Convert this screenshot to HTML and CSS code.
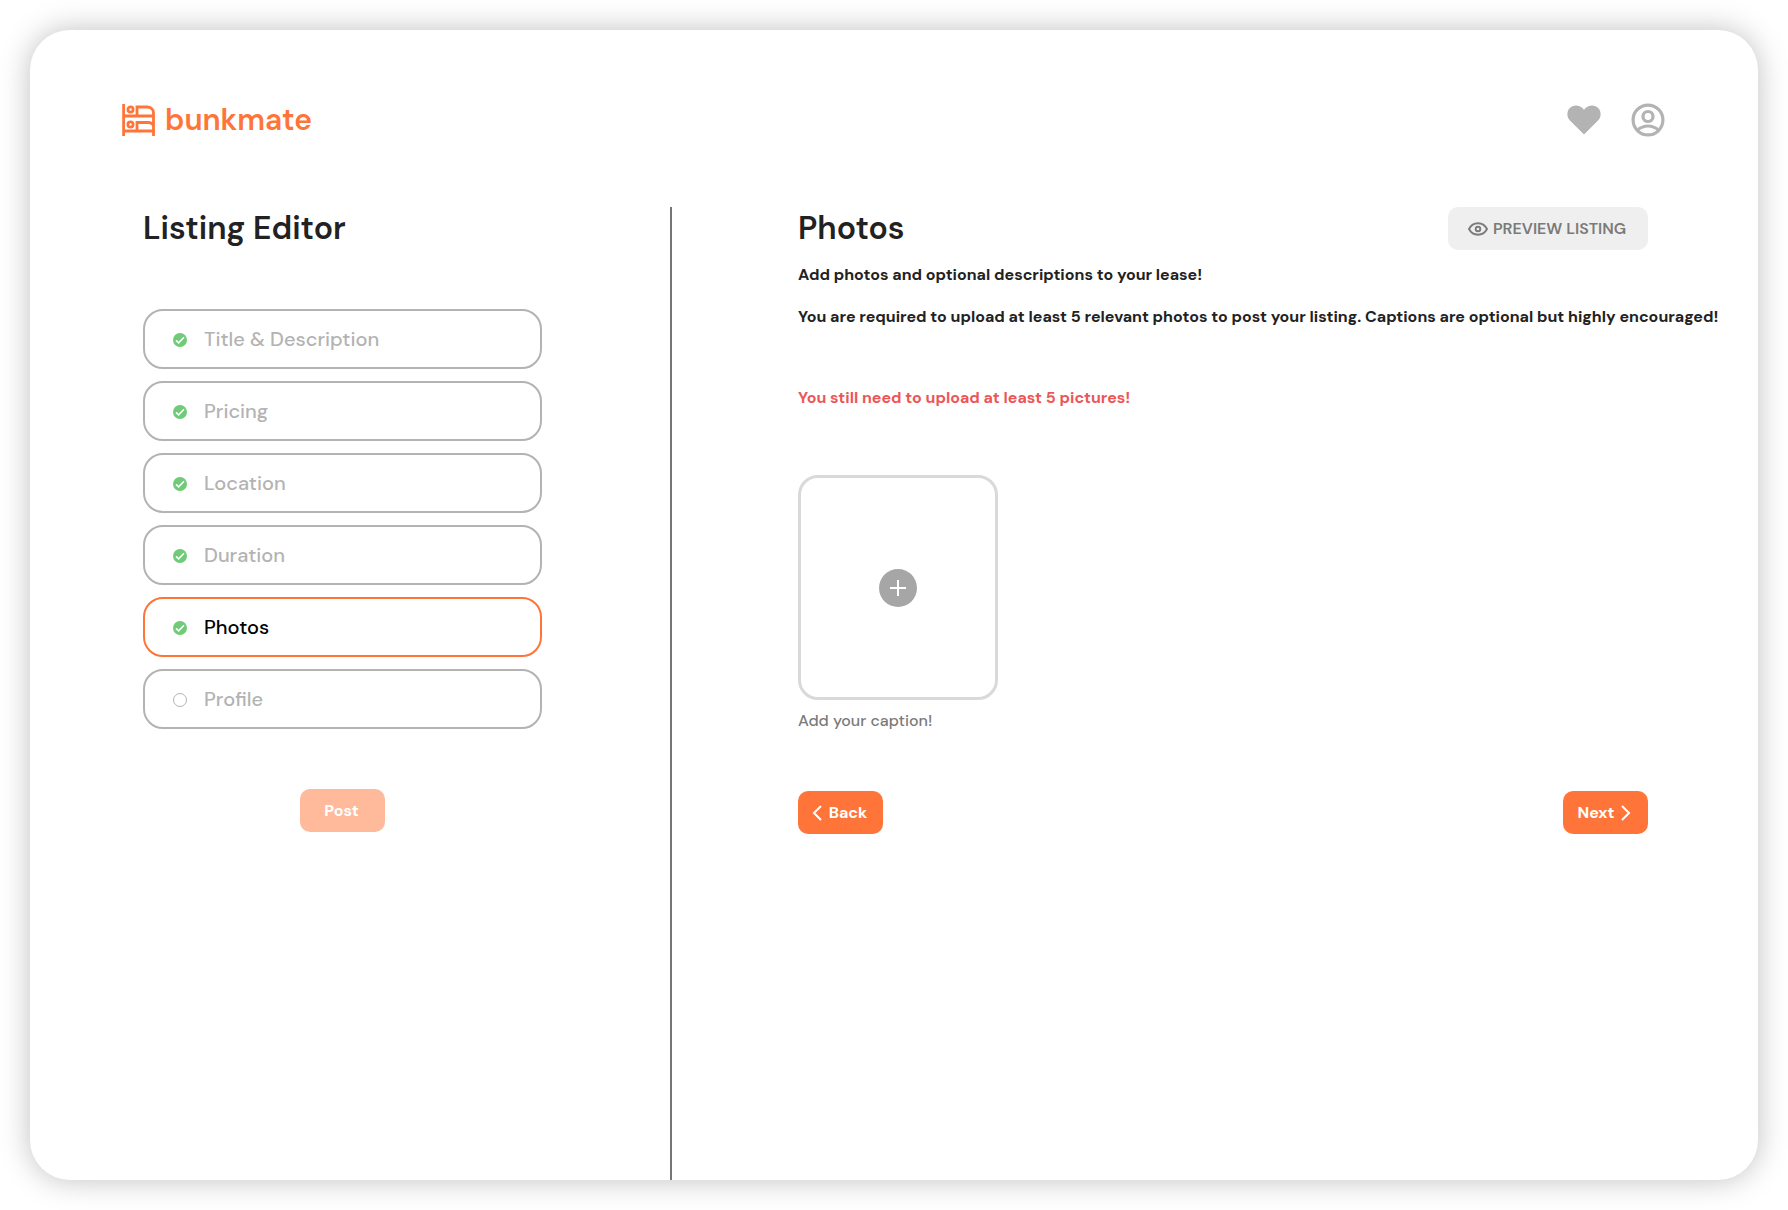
FILE: index.html
```html
<!DOCTYPE html>
<html lang="en">
<head>
  <meta charset="UTF-8">
  <title>bunkmate - Listing Editor</title>
  <meta name="viewport" content="width=device-width, initial-scale=1">
  <link rel="stylesheet" href="styles.css">
</head>
<body>
  <div class="card">
    <header class="header">
      <a class="logo" href="#">
        <svg width="34" height="32" viewBox="0 0 34 32" fill="none" stroke="currentColor" stroke-width="2.8">
          <path d="M1.6 0v32M1.6 12H31.5M1.6 27H31.5M31.5 32V9C31.5 5 28.5 3 25 3H15v9M15 27v-8.5h11c3 0 5.5 1.5 5.5 4"/>
          <circle cx="8.5" cy="5.5" r="2.6"/>
          <circle cx="8.5" cy="20.5" r="2.6"/>
        </svg>
        <span>bunkmate</span>
      </a>
      <nav class="header-links">
        <a href="#" aria-label="Favorites">
          <svg width="34" height="30" viewBox="0 0 34 30" fill="currentColor">
            <path d="M17 29.5L3.2 15.8C-.7 11.9-.3 6.3 2.8 3.1 6.5-.7 12.7-.5 17 4.7 21.3-.5 27.5-.7 31.2 3.1 34.3 6.3 34.7 11.9 30.8 15.8z"/>
          </svg>
        </a>
        <a href="#" aria-label="Account">
          <svg width="34" height="34" viewBox="0 0 34 34" fill="none" stroke="currentColor" stroke-width="3.2">
            <circle cx="17" cy="17" r="14.9"/>
            <circle cx="17" cy="13.5" r="5"/>
            <path d="M6.5 27.2c6-5.6 15-5.6 21 0"/>
          </svg>
        </a>
      </nav>
    </header>

    <div class="columns">
      <aside class="sidebar">
        <h1>Listing Editor</h1>
        <div class="steps">
          <button class="step" type="button">
            <svg class="check" viewBox="0 0 14 14"><circle cx="7" cy="7" r="7"/><path d="M3 7.3l2.6 2.5L11 4.2"/></svg>
            Title &amp; Description
          </button>
          <button class="step" type="button">
            <svg class="check" viewBox="0 0 14 14"><circle cx="7" cy="7" r="7"/><path d="M3 7.3l2.6 2.5L11 4.2"/></svg>
            Pricing
          </button>
          <button class="step" type="button">
            <svg class="check" viewBox="0 0 14 14"><circle cx="7" cy="7" r="7"/><path d="M3 7.3l2.6 2.5L11 4.2"/></svg>
            Location
          </button>
          <button class="step" type="button">
            <svg class="check" viewBox="0 0 14 14"><circle cx="7" cy="7" r="7"/><path d="M3 7.3l2.6 2.5L11 4.2"/></svg>
            Duration
          </button>
          <button class="step active" type="button">
            <svg class="check" viewBox="0 0 14 14"><circle cx="7" cy="7" r="7"/><path d="M3 7.3l2.6 2.5L11 4.2"/></svg>
            Photos
          </button>
          <button class="step" type="button">
            <span class="empty-circle"></span>
            Profile
          </button>
        </div>
        <button class="btn post-btn" type="button" disabled>Post</button>
      </aside>

      <main class="content">
        <div class="title-row">
          <h2>Photos</h2>
          <button class="preview-btn" type="button">
            <svg width="20" height="14" viewBox="0 0 20 14" fill="none" stroke="currentColor" stroke-width="1.9">
              <path d="M1 7c4-7.6 14-7.6 18 0-4 7.6-14 7.6-18 0z"/>
              <circle cx="10" cy="7" r="2.3"/>
            </svg>
            PREVIEW LISTING
          </button>
        </div>
        <p class="info">Add photos and optional descriptions to your lease!</p>
        <p class="info">You are required to upload at least 5 relevant photos to post your listing. Captions are optional but highly encouraged!</p>
        <p class="warning">You still need to upload at least 5 pictures!</p>

        <div class="photo">
          <button class="photo-box" type="button" aria-label="Add photo">
            <svg width="38" height="38" viewBox="0 0 38 38">
              <circle cx="19" cy="19" r="19" fill="#a6a6a6"/>
              <path d="M19 11v16M11 19h16" stroke="#fff" stroke-width="2"/>
            </svg>
          </button>
          <input class="caption" type="text" placeholder="Add your caption!" aria-label="Caption">
        </div>

        <div class="nav-row">
          <button class="btn" type="button">
            <svg width="10" height="16" viewBox="0 0 10 16"><path d="M9 1L2 8l7 7"/></svg>
            Back
          </button>
          <button class="btn" type="button">
            Next
            <svg width="10" height="16" viewBox="0 0 10 16"><path d="M1 1l7 7-7 7"/></svg>
          </button>
        </div>
      </main>
    </div>
  </div>
</body>
</html>
```
FILE: styles.css
```css
* {
  box-sizing: border-box;
}
body {
  margin: 0;
  padding: 30px;
  background: #fff;
  color: #222;
  font-family: 'DM Sans', Inter, sans-serif;
  font-optical-sizing: none;
}
button, input {
  font-family: inherit;
  font-optical-sizing: none;
}
button {
  cursor: pointer;
}
h1, h2, p {
  margin: 0;
}
h1, h2 {
  font-size: 32px;
  line-height: 42px;
  font-weight: 600;
}
.card {
  display: flex;
  flex-direction: column;
  min-height: calc(100vh - 60px);
  border-radius: 40px;
  box-shadow: 0 0 30px rgba(0, 0, 0, 0.25);
  background: #fff;
}
.header {
  display: flex;
  align-items: center;
  justify-content: space-between;
  padding: 70px 93px 67px 92px;
}
.logo {
  display: flex;
  align-items: center;
  gap: 9px;
  color: #ff7539;
  font-size: 30px;
  line-height: 40px;
  font-weight: 600;
  text-decoration: none;
}
.header-links {
  display: flex;
  align-items: center;
  gap: 30px;
  height: 36px;
}
.header-links a {
  display: flex;
  color: #b3b3b3;
}
.columns {
  display: flex;
  flex: 1;
}
.sidebar {
  flex: 0 0 642px;
  padding: 0 128px 0 113px;
  border-right: 2px solid #767676;
}
.steps {
  display: flex;
  flex-direction: column;
  gap: 12px;
  margin-top: 60px;
}
.step {
  display: flex;
  align-items: center;
  gap: 17px;
  height: 60px;
  padding: 0 28px;
  border: 2px solid #b3b3b3;
  border-radius: 20px;
  background: #fff;
  color: #b3b3b3;
  font-size: 20px;
  font-weight: 500;
}
.step.active {
  border-color: #ff7539;
  color: #000;
}
.check {
  width: 14px;
  height: 14px;
  margin-top: 2px;
  fill: #6fcb78;
}
.check path {
  fill: none;
  stroke: #fff;
  stroke-width: 1.6;
}
.empty-circle {
  width: 14px;
  height: 14px;
  margin-top: 2px;
  border: 1px solid #b3b3b3;
  border-radius: 50%;
}
.btn {
  display: flex;
  align-items: center;
  justify-content: center;
  gap: 7px;
  width: 85px;
  height: 43px;
  padding: 0 2px 0 0;
  border: none;
  border-radius: 10px;
  background: #ff7539;
  color: #fff;
  font-size: 16px;
  font-weight: 700;
}
.btn svg {
  fill: none;
  stroke: #fff;
  stroke-width: 2;
}
.post-btn {
  margin: 60px auto 0;
  opacity: 0.5;
  cursor: default;
}
.content {
  flex: 1;
  min-width: 0;
  padding: 0 110px 0 126px;
}
.title-row {
  display: flex;
  justify-content: space-between;
  margin-bottom: 15px;
}
.preview-btn {
  display: flex;
  align-items: center;
  justify-content: center;
  gap: 5px;
  width: 200px;
  height: 43px;
  padding: 0 2px 0 0;
  border: none;
  border-radius: 10px;
  background: #efefef;
  color: #7a7a7a;
  font-size: 16px;
  font-weight: 600;
}
.info, .warning {
  font-size: 16px;
  line-height: 20px;
  font-weight: 700;
  white-space: nowrap;
}
.info {
  margin-bottom: 22px;
}
.warning {
  margin-top: 61px;
  color: #eb5757;
}
.photo {
  display: flex;
  flex-direction: column;
  width: 200px;
  margin-top: 67px;
}
.photo-box {
  display: flex;
  align-items: center;
  justify-content: center;
  height: 225px;
  border: 3px solid #d9d9d9;
  border-radius: 20px;
  background: #fff;
}
.caption {
  height: 24px;
  margin-top: 8px;
  padding: 0;
  border: none;
  font-size: 16px;
  font-weight: 500;
}
.caption::placeholder {
  color: #7a7a7a;
}
.nav-row {
  display: flex;
  justify-content: space-between;
  margin-top: 59px;
}
```
